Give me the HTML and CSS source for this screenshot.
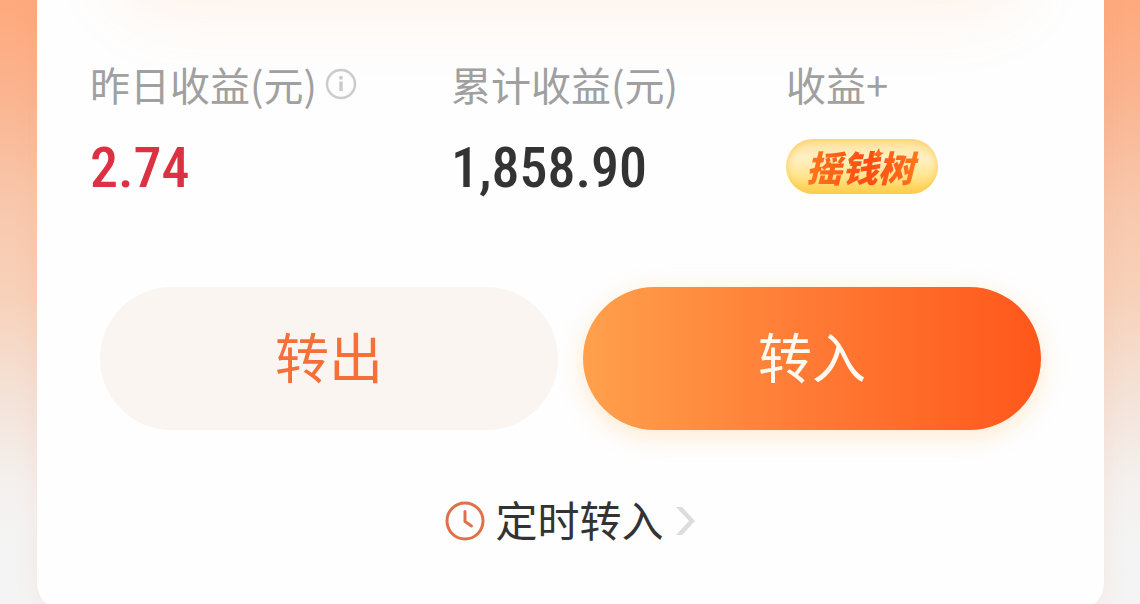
FILE: index.html
```
<!DOCTYPE html>
<html lang="zh-CN">
<head>
<meta charset="UTF-8">
<meta name="viewport" content="width=device-width, initial-scale=1.0">
<title>收益</title>
<link rel="stylesheet" href="styles.css">
</head>
<body>

<main class="card">
    <dl class="stats">
        <div class="stat">
            <dt>
                <span>昨日收益(元)</span>
                <button class="info" type="button" aria-label="收益说明">
                    <svg width="32" height="32" viewBox="0 0 32 32" fill="none" stroke="#cbcbcb">
                        <circle cx="16" cy="16" r="14" stroke-width="2.5"/>
                        <circle cx="16" cy="9.8" r="2" fill="#cbcbcb" stroke="none"/>
                        <path d="M16 13.500v9.500" stroke-width="3.4"/>
                    </svg>
                </button>
            </dt>
            <dd class="amount red">2.74</dd>
        </div>
        <div class="stat">
            <dt>累计收益(元)</dt>
            <dd class="amount">1,858.90</dd>
        </div>
        <div class="stat">
            <dt>收益+</dt>
            <dd>
                <a class="pill" href="#">
                    <span class="pill-text">摇钱树</span>
                    <svg class="spark" width="12" height="12" viewBox="0 0 12 12">
                        <path d="M7 0l1 4 4 1-4 2-2 5-1-4-5-1 4-2z" fill="#ff6a1c"/>
                    </svg>
                </a>
            </dd>
        </div>
    </dl>

    <div class="actions">
        <button class="btn btn-out" type="button">转出</button>
        <button class="btn btn-in" type="button">转入</button>
    </div>

    <a class="timer" href="#">
        <svg width="40" height="40" viewBox="0 0 40 40" fill="none" stroke="#e0704a" stroke-width="3">
            <circle cx="20" cy="20" r="18"/>
            <path d="M20 10.500v10l6.500 4.500" stroke-linecap="round" stroke-linejoin="round"/>
        </svg>
        <span class="timer-text">定时转入</span>
        <svg class="arrow" width="20" height="28" viewBox="0 0 20 28">
            <path d="M0 0h6l13 14-13 14H0l13-14z" fill="#dcdcdc"/>
        </svg>
    </a>
</main>

</body>
</html>
```
FILE: styles.css
```
* {
    box-sizing: border-box;
}
body {
    margin: 0;
    padding: 0 36px 0 37px;
    min-height: 100vh;
    overflow: hidden;
    font-family: "Noto Sans CJK SC", sans-serif;
    color: #333;
    background: linear-gradient(#fea97d 0, #fab591 100px, #f8c7ac 200px, #f7d2bb 300px, #f4e3d9 400px, #f4f0ee 480px, #f4f4f4 540px);
}
.card {
    position: relative;
    overflow: hidden;
    padding: 58px 53px 60px;
    border-radius: 0 0 28px 28px;
    background: #fefefe;
    box-shadow: 0 0 24px rgba(250, 120, 60, 0.1);
}
/* soft glow under the panel above */
.card::before {
    content: "";
    position: absolute;
    top: -120px;
    left: 90px;
    right: 90px;
    height: 100px;
    border-radius: 40px;
    box-shadow: 0 20px 70px 10px rgba(255, 150, 80, 0.13);
}
.stats {
    position: relative;
    display: grid;
    grid-template-columns: 361fr 335fr 265fr;
    margin: 0;
}
dt {
    display: flex;
    align-items: center;
    gap: 8px;
    height: 52px;
    font-size: 40px;
    font-weight: 400;
    line-height: 48px;
    color: #a0a0a0;
    white-space: nowrap;
}
dd {
    display: flex;
    align-items: center;
    height: 64px;
    margin: 24px 0 0;
}
.amount {
    padding-top: 4px;
    font-family: "Roboto Condensed", Roboto, sans-serif;
    font-size: 56px;
    font-weight: 500;
    line-height: 64px;
}
.red {
    color: #dc3142;
}
.info {
    display: flex;
    padding: 0;
    border: 0;
    background: none;
    cursor: pointer;
}
.pill {
    position: relative;
    display: flex;
    align-items: center;
    justify-content: center;
    width: 152px;
    height: 55px;
    border-radius: 28px;
    background: linear-gradient(#fee09a, #fff0c4 35%, #ffe694 65%, #ffce48);
    box-shadow: inset 0 0 8px #fcc94f;
    text-decoration: none;
}
.pill-text {
    padding: 0 6px 0 2px;
    font-family: "Noto Sans CJK SC", sans-serif;
    font-size: 36px;
    font-weight: 900;
    font-style: italic;
    line-height: 52px;
    color: transparent;
    background: linear-gradient(90deg, #ff7a1a, #ff4b14 55%, #ff7a1a);
    -webkit-background-clip: text;
    background-clip: text;
}
.spark {
    position: absolute;
    top: 9px;
    left: 86px;
}
.actions {
    position: relative;
    display: flex;
    gap: 25px;
    margin-top: 89px;
    padding: 0 10px;
}
.btn {
    flex: 1;
    height: 143px;
    padding: 0 0 6px;
    border: 0;
    border-radius: 72px;
    font-family: inherit;
    font-size: 54px;
    font-weight: 400;
    line-height: 72px;
    cursor: pointer;
}
.btn-out {
    color: #f57038;
    background: #faf5f1;
}
.btn-in {
    color: #fffaf0;
    background: linear-gradient(90deg, #ffa04c, #ff7a34 50%, #ff571b);
    box-shadow: 0 6px 24px rgba(255, 170, 60, 0.25);
}
.timer {
    display: flex;
    align-items: center;
    justify-content: center;
    gap: 10px;
    margin-top: 61px;
    font-size: 42px;
    line-height: 56px;
    color: #333;
    text-decoration: none;
}
.timer-text {
    padding-bottom: 4px;
}
.arrow {
    margin-left: 2px;
}
```
